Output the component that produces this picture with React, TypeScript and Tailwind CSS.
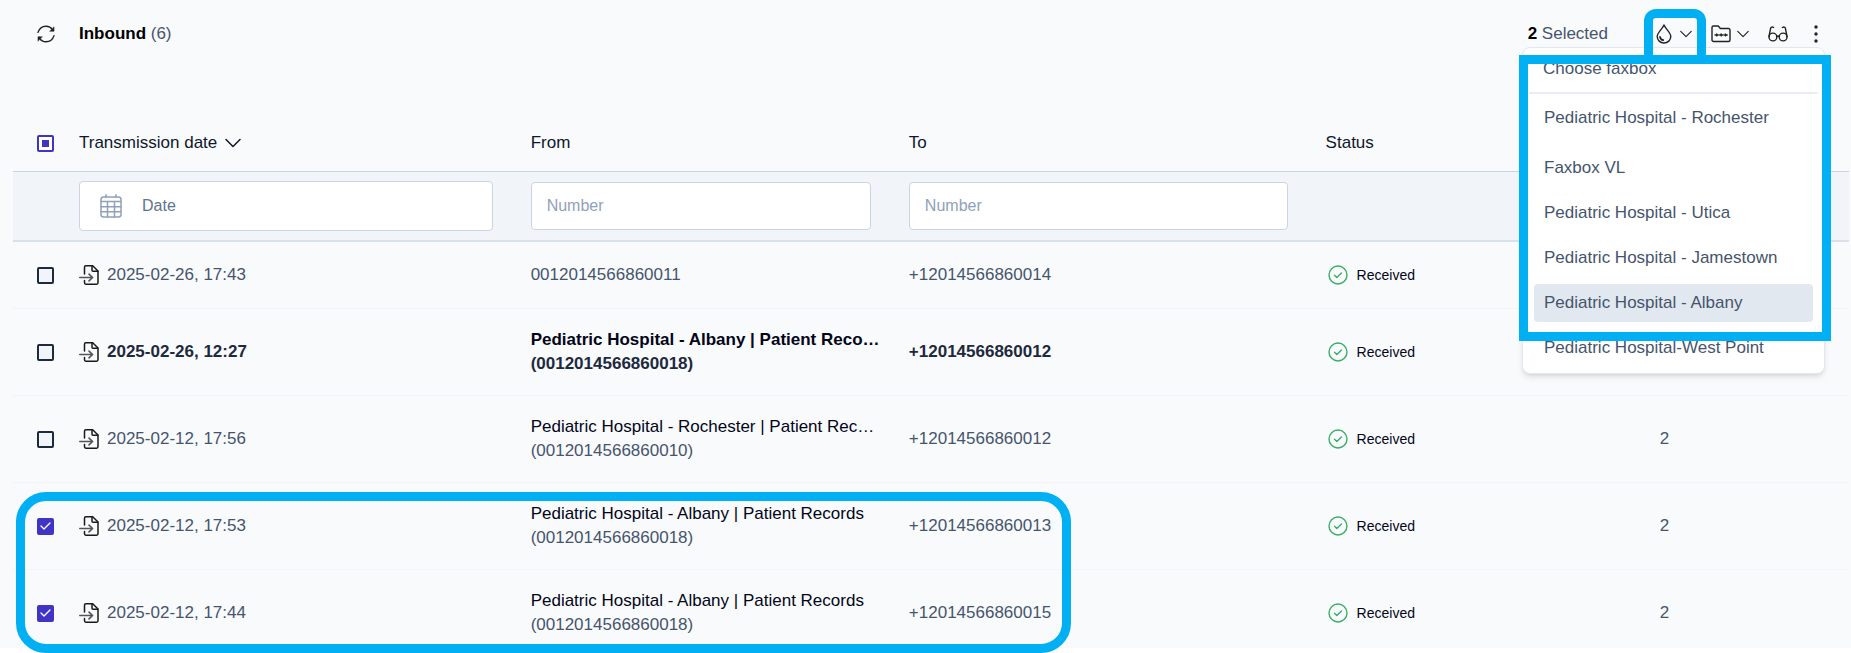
import { useState } from 'react';

type Fax = {
  id: number;
  date: string;
  from: string;
  name?: string;
  to: string;
  pages?: number;
  unread?: boolean;
};

const faxes: Fax[] = [
  { id: 1, date: '2025-02-26, 17:43', from: '0012014566860011', to: '+12014566860014' },
  {
    id: 2,
    date: '2025-02-26, 12:27',
    name: 'Pediatric Hospital - Albany | Patient Records',
    from: '(0012014566860018)',
    to: '+12014566860012',
    unread: true,
  },
  {
    id: 3,
    date: '2025-02-12, 17:56',
    name: 'Pediatric Hospital - Rochester | Patient Records',
    from: '(0012014566860010)',
    to: '+12014566860012',
    pages: 2,
  },
  {
    id: 4,
    date: '2025-02-12, 17:53',
    name: 'Pediatric Hospital - Albany | Patient Records',
    from: '(0012014566860018)',
    to: '+12014566860013',
    pages: 2,
  },
  {
    id: 5,
    date: '2025-02-12, 17:44',
    name: 'Pediatric Hospital - Albany | Patient Records',
    from: '(0012014566860018)',
    to: '+12014566860015',
    pages: 2,
  },
];

const faxboxes = [
  'Pediatric Hospital - Rochester',
  'Faxbox VL',
  'Pediatric Hospital - Utica',
  'Pediatric Hospital - Jamestown',
  'Pediatric Hospital - Albany',
  'Pediatric Hospital-West Point',
];

const stroke = {
  fill: 'none',
  stroke: 'currentColor',
  strokeLinecap: 'round' as const,
  strokeLinejoin: 'round' as const,
  'aria-hidden': true,
};

function RefreshIcon() {
  return (
    <svg className="size-[18px]" viewBox="0 0 18 18" strokeWidth="1.4" {...stroke}>
      <path d="M1 7.4C2.200 3.600 5.300 1.200 9 1.200c2.700 0 5 1.200 6.400 3.400" />
      <path d="M17 10.600c-1.200 3.800-4.300 6.200-8 6.200-2.700 0-5-1.200-6.400-3.400" />
      <path d="M17 2.200v4h-4z" fill="currentColor" strokeWidth="0.6" />
      <path d="M1 15.800v-4h4z" fill="currentColor" strokeWidth="0.6" />
    </svg>
  );
}

function ChevronIcon({ className }: { className: string }) {
  return (
    <svg className={className} viewBox="0 0 16 10" strokeWidth="1.5" {...stroke}>
      <path d="M1 1.5l7 7 7-7" />
    </svg>
  );
}

function DropIcon() {
  return (
    <svg className="h-5 w-4" viewBox="0 0 16 20" strokeWidth="1.4" {...stroke}>
      <path d="M8 1C6.800 4.600 1.200 8.400 1.200 12.600a6.800 6.400 0 0 0 13.600 0C14.800 8.400 9.200 4.600 8 1z" />
      <path d="M4 12.800a4 4 0 0 0 3.300 3.400" strokeWidth="1.700" />
    </svg>
  );
}

function FolderIcon() {
  return (
    <svg className="h-[18px] w-5" viewBox="0 0 20 18" strokeWidth="1.4" {...stroke}>
      <path d="M1 15V2.500A1.500 1.500 0 0 1 2.500 1h4.700l2.200 2.500h8A1.500 1.500 0 0 1 19 5v10a1.500 1.500 0 0 1-1.500 1.500h-15A1.500 1.500 0 0 1 1 15z" />
      <path d="M3.800 10h12.800" strokeWidth="1" />
      <path d="M5.800 8.500L7.300 10l-1.500 1.500L4.300 10zM10.200 8.500l1.500 1.500-1.500 1.500L8.700 10zM14.600 8.500l1.500 1.500-1.500 1.500-1.500-1.500z" fill="currentColor" strokeWidth="0.4" />
    </svg>
  );
}

function GlassesIcon() {
  return (
    <svg className="h-4 w-5" viewBox="0 0 20 16" strokeWidth="1.4" {...stroke}>
      <circle cx="4.900" cy="11" r="3.900" />
      <circle cx="15.100" cy="11" r="3.900" />
      <path d="M8.800 10.600c.6-.9 1.800-.9 2.400 0" />
      <path d="M1 10.500L2.600 2.300C2.900 1 4.300.7 5.600 1.500M19 10.500l-1.600-8.200C17.100 1 15.700.7 14.400 1.500" />
    </svg>
  );
}

function DocumentIcon() {
  return (
    <svg className="h-5 w-5 shrink-0 text-[#1a1a1a]" viewBox="0 0 20 20" strokeWidth="1.5" {...stroke}>
      <path d="M5.500 9V2.200A1.400 1.400 0 0 1 6.900.8h6.800L19 6v11.800a1.400 1.400 0 0 1-1.400 1.400H6.900a1.400 1.400 0 0 1-1.400-1.400V15.500" />
      <path d="M13 1v4.300a1 1 0 0 0 1 1h4.800" />
      <path d="M.8 12.500h12.400M10 9.100l3.600 3.400-3.600 3.400" stroke="#555" strokeWidth="1.600" />
    </svg>
  );
}

function CalendarIcon() {
  return (
    <svg className="h-6 w-[22px] shrink-0 text-slate-400" viewBox="0 0 22 24" strokeWidth="1.5" {...stroke}>
      <rect x="1" y="3" width="20" height="20" rx="2.500" />
      <path d="M6 .8V3M16 .8V3M1 7.500h20M1 12.700h20M1 17.800h20M7.500 7.500V23M14.500 7.500V23" />
    </svg>
  );
}

function ReceivedIcon() {
  return (
    <svg className="size-5 text-[#3aae68]" viewBox="0 0 20 20" strokeWidth="1.4" {...stroke}>
      <circle cx="10" cy="10" r="9" />
      <path d="M6.500 10.300l2.300 2.200 4.700-4.600" />
    </svg>
  );
}

type CheckboxProps = {
  label: string;
  checked: boolean;
  mixed?: boolean;
  onChange: () => void;
};

function Checkbox({ label, checked, mixed, onChange }: CheckboxProps) {
  return (
    <span className="grid size-[17px] place-items-center">
      <input
        type="checkbox"
        aria-label={label}
        checked={checked}
        onChange={onChange}
        ref={(el) => {
          if (el) el.indeterminate = Boolean(mixed);
        }}
        className="col-start-1 row-start-1 size-[17px] appearance-none rounded-[2px] border-2 border-slate-800 bg-slate-100 checked:border-[#4034c4] checked:bg-[#4034c4] indeterminate:border-[#4034c4] indeterminate:bg-white"
      />
      {mixed && <span className="pointer-events-none col-start-1 row-start-1 size-[7px] bg-[#4034c4]" />}
      {checked && !mixed && (
        <svg className="pointer-events-none col-start-1 row-start-1 h-2 w-[11px] text-white" viewBox="0 0 11 8" strokeWidth="1.3" {...stroke}>
          <path d="M1 4l3 3 6-6" />
        </svg>
      )}
    </span>
  );
}

export default function App() {
  const [selected, setSelected] = useState([4, 5]);

  const toggle = (id: number) =>
    setSelected((ids) => (ids.includes(id) ? ids.filter((i) => i !== id) : [...ids, id]));

  const allSelected = selected.length === faxes.length;
  const toggleAll = () => setSelected(allSelected ? [] : faxes.map((fax) => fax.id));

  return (
    <div className="relative bg-white pb-[5px]">
      <main className="bg-[#f9fafc] font-['Liberation_Sans',Arial,sans-serif] text-[17px] leading-6 text-slate-600">
        <header className="relative flex h-[67px] items-center pr-[33px] pl-[37px]">
          <button type="button" aria-label="Refresh" className="text-[#222]">
            <RefreshIcon />
          </button>
          <h1 className="ml-6">
            <span className="font-bold text-black">Inbound</span> (6)
          </h1>

          <div className="ml-auto flex items-center text-[#222]">
            <p className="mr-12 text-slate-600">
              <span className="font-bold text-black">{selected.length}</span> Selected
            </p>
            <button type="button" aria-label="Move to faxbox" aria-expanded="true" className="flex items-center gap-2">
              <DropIcon />
              <ChevronIcon className="h-2 w-3" />
            </button>
            <button type="button" aria-label="Move to folder" className="ml-[19px] flex items-center gap-[6px]">
              <FolderIcon />
              <ChevronIcon className="h-2 w-3" />
            </button>
            <button type="button" aria-label="Mark as read" className="ml-[19px]">
              <GlassesIcon />
            </button>
            <button type="button" aria-label="More actions" className="ml-[26px]">
              <svg className="h-[18px] w-1" viewBox="0 0 4 18" fill="currentColor" aria-hidden="true">
                <circle cx="2" cy="2" r="1.700" />
                <circle cx="2" cy="9" r="1.700" />
                <circle cx="2" cy="16" r="1.700" />
              </svg>
            </button>
          </div>

          <div className="absolute top-[47px] right-[26px] z-10 w-[303px] rounded-lg border border-slate-200 bg-white p-[6px] shadow-md">
            <p className="border-b-2 border-[#ecedf2] px-[14px] pt-[3px] pb-[11px]">Choose faxbox</p>
            <ul className="px-[5px] pt-[5px]">
              {faxboxes.map((name) => (
                <li key={name} className="pb-[7px] first:pb-3 last:pb-0">
                  <button
                    type="button"
                    className={`block h-[38px] w-full rounded-[4px] px-[10px] text-left ${
                      name === 'Pediatric Hospital - Albany' ? 'bg-slate-200' : ''
                    }`}
                  >
                    {name}
                  </button>
                </li>
              ))}
            </ul>
          </div>

          <div className="pointer-events-none absolute top-[9px] right-[145px] z-20 h-[55px] w-[62px] rounded-t-xl border-9 border-[#00b0f2]" />
          <div className="pointer-events-none absolute top-[55px] right-5 z-20 h-[286px] w-[312px] border-9 border-[#00b0f2]" />
        </header>

        <div className="pt-[46px] pr-[2px] pl-[13px]">
          <table className="w-full table-fixed border-separate border-spacing-0 text-left">
            <colgroup>
              <col className="w-[66px]" />
              <col className="w-[24.6%]" />
              <col className="w-[20.6%]" />
              <col className="w-[22.7%]" />
              <col className="w-[18.2%]" />
              <col />
            </colgroup>
            <thead className="text-slate-900">
              <tr className="[&>th]:pt-[18px] [&>th]:pb-4 [&>th]:font-normal">
                <th className="pl-6">
                  <Checkbox label="Select all" checked={allSelected} mixed={selected.length > 0 && !allSelected} onChange={toggleAll} />
                </th>
                <th>
                  <button type="button" className="flex items-center gap-2">
                    Transmission date
                    <ChevronIcon className="h-[10px] w-4" />
                  </button>
                </th>
                <th>From</th>
                <th>To</th>
                <th>Status</th>
                <th aria-label="Pages" />
              </tr>
              <tr className="[&>td]:border-t [&>td]:border-b-2 [&>td]:border-t-slate-300 [&>td]:border-b-[#d8e0e9] [&>td]:bg-[#f1f4f9] [&>td]:py-[9px] [&>td]:text-base">
                <td />
                <td className="pr-[38px]">
                  <label className="flex h-[50px] items-center gap-5 rounded-[4px] border border-slate-300 bg-white px-5">
                    <CalendarIcon />
                    <input aria-label="Date" placeholder="Date" className="w-full outline-none placeholder:text-slate-500" />
                  </label>
                </td>
                <td className="pr-[38px]">
                  <input
                    aria-label="From number"
                    placeholder="Number"
                    className="block h-12 w-full rounded-[4px] border border-slate-300 bg-white px-[15px] placeholder:text-slate-400"
                  />
                </td>
                <td className="pr-[38px]">
                  <input
                    aria-label="To number"
                    placeholder="Number"
                    className="block h-12 w-full rounded-[4px] border border-slate-300 bg-white px-[15px] placeholder:text-slate-400"
                  />
                </td>
                <td />
                <td />
              </tr>
            </thead>
            <tbody>
              {faxes.map((fax) => (
                <tr
                  key={fax.id}
                  className={`[&>td]:border-b [&>td]:border-slate-100 [&>td]:py-[19px] last:[&>td]:border-b-0 last:[&>td]:pb-[11px] ${
                    fax.unread ? 'font-bold text-slate-800' : ''
                  }`}
                >
                  <td className="pl-6">
                    <Checkbox label={`Select ${fax.date}`} checked={selected.includes(fax.id)} onChange={() => toggle(fax.id)} />
                  </td>
                  <td>
                    <span className="flex h-7 items-center gap-2">
                      <DocumentIcon />
                      {fax.date}
                    </span>
                  </td>
                  <td className="pr-7">
                    {fax.name && <span className="block truncate text-slate-950">{fax.name}</span>}
                    <span className="block">{fax.from}</span>
                  </td>
                  <td>{fax.to}</td>
                  <td>
                    <span className="flex items-center gap-[9px] pl-[2px] text-sm font-normal text-slate-950">
                      <ReceivedIcon />
                      Received
                    </span>
                  </td>
                  <td>{fax.pages}</td>
                </tr>
              ))}
            </tbody>
          </table>
        </div>
      </main>

      <div className="pointer-events-none absolute bottom-0 left-4 h-[161px] w-[57%] rounded-[30px] border-9 border-[#00b0f2]" />
    </div>
  );
}
